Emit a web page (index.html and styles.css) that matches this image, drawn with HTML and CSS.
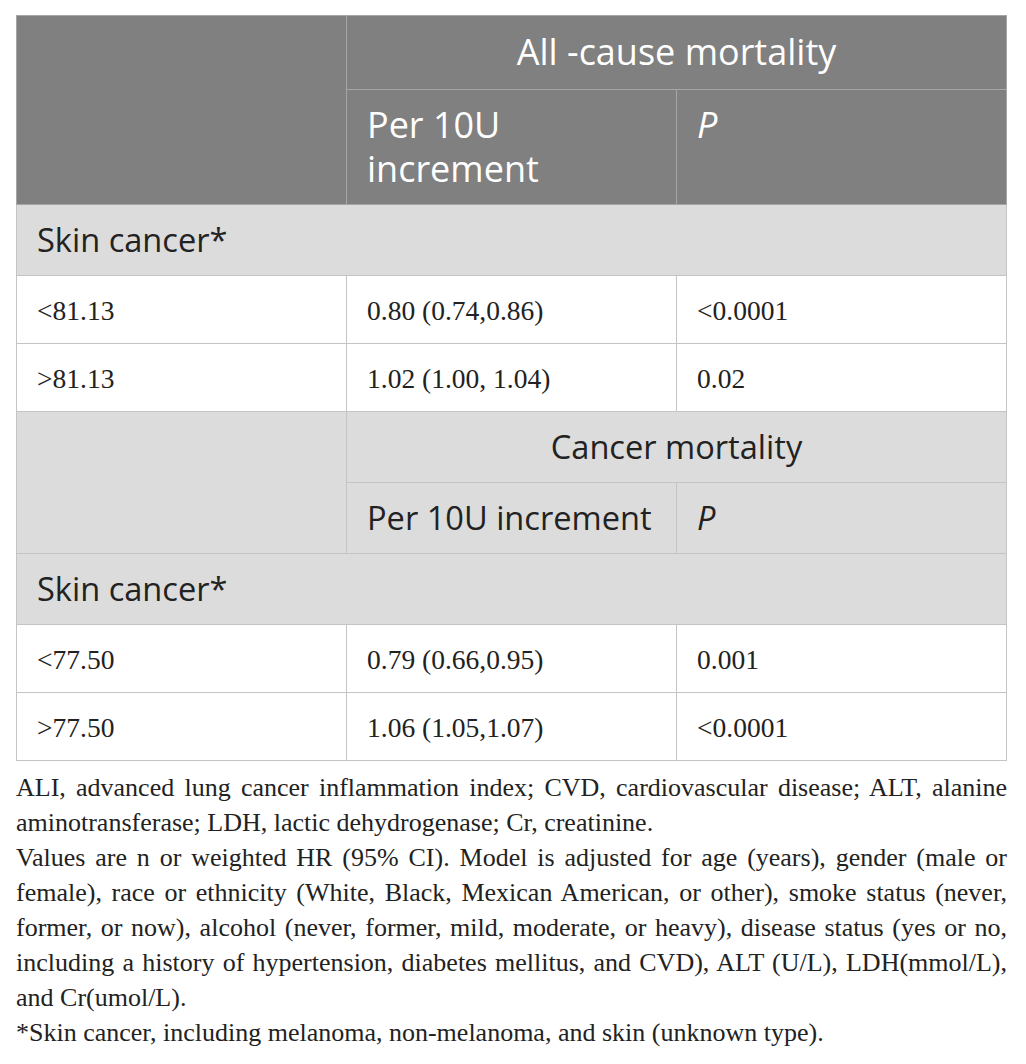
FILE: index.html
```html
<!DOCTYPE html>
<html lang="en">
<head>
<meta charset="utf-8">
<title>Table</title>
<link rel="stylesheet" href="styles.css">
</head>
<body>
<div class="wrap">
  <table class="tbl">
    <colgroup><col class="c"><col class="c"><col class="c"></colgroup>
    <tbody>
      <tr class="hd hd-top">
        <td rowspan="2"></td>
        <td colspan="2" class="center">All -cause mortality</td>
      </tr>
      <tr class="hd hd-sub">
        <td>Per 10U increment</td>
        <td><i>P</i></td>
      </tr>
      <tr class="lt">
        <td colspan="3">Skin cancer*</td>
      </tr>
      <tr class="dt">
        <td>&lt;81.13</td>
        <td>0.80 (0.74,0.86)</td>
        <td>&lt;0.0001</td>
      </tr>
      <tr class="dt">
        <td>&gt;81.13</td>
        <td>1.02 (1.00, 1.04)</td>
        <td>0.02</td>
      </tr>
      <tr class="lt">
        <td rowspan="2"></td>
        <td colspan="2" class="center">Cancer mortality</td>
      </tr>
      <tr class="lt">
        <td>Per 10U increment</td>
        <td><i>P</i></td>
      </tr>
      <tr class="lt">
        <td colspan="3">Skin cancer*</td>
      </tr>
      <tr class="dt">
        <td>&lt;77.50</td>
        <td>0.79 (0.66,0.95)</td>
        <td>0.001</td>
      </tr>
      <tr class="dt">
        <td>&gt;77.50</td>
        <td>1.06 (1.05,1.07)</td>
        <td>&lt;0.0001</td>
      </tr>
    </tbody>
  </table>
  <div class="notes">
    <p>ALI, advanced lung cancer inflammation index; CVD, cardiovascular disease; ALT, alanine aminotransferase; LDH, lactic dehydrogenase; Cr, creatinine.</p>
    <p>Values are n or weighted HR (95% CI). Model is adjusted for age (years), gender (male or female), race or ethnicity (White, Black, Mexican American, or other), smoke status (never, former, or now), alcohol (never, former, mild, moderate, or heavy), disease status (yes or no, including a history of hypertension, diabetes mellitus, and CVD), ALT (U/L), LDH(mmol/L), and Cr(umol/L).</p>
    <p>*Skin cancer, including melanoma, non-melanoma, and skin (unknown type).</p>
  </div>
</div>
</body>
</html>
```
FILE: styles.css
```css
html, body {
  margin: 0;
  padding: 0;
  background: #ffffff;
}

.wrap {
  width: 991px;
  margin: 15px 0 0 16px;
}

.tbl {
  width: 991px;
  border-collapse: collapse;
  table-layout: fixed;
  border: 1px solid #c4c4c4;
}

.tbl .c {
  width: 33.333%;
}

.tbl td {
  border: 1px solid #c4c4c4;
  padding: 0 20px;
  text-align: left;
  vertical-align: middle;
}

.tbl td.center {
  text-align: center;
}

.hd td {
  background: #808080;
  color: #ffffff;
  font-family: "Open Sans", sans-serif;
  font-size: 36px;
  line-height: 44px;
  border-color: #a6a6a6;
}

.hd-top td {
  padding-top: 14px;
  padding-bottom: 15px;
}

.hd-sub td {
  vertical-align: top;
  padding-top: 13px;
  padding-bottom: 13px;
}

.lt td {
  background: #dcdcdc;
  color: #222222;
  font-family: "Open Sans", sans-serif;
  font-size: 32.6px;
  line-height: 44px;
  padding-top: 13px;
  padding-bottom: 13px;
}

.dt td {
  background: #ffffff;
  color: #222222;
  font-family: "Liberation Serif", serif;
  font-size: 27.5px;
  line-height: 35px;
  padding-top: 17px;
  padding-bottom: 15px;
}

.notes {
  margin-top: 9px;
  font-family: "Liberation Serif", serif;
  font-size: 26px;
  line-height: 35px;
  color: #222222;
  text-align: justify;
}

.notes p {
  margin: 0;
}
```
